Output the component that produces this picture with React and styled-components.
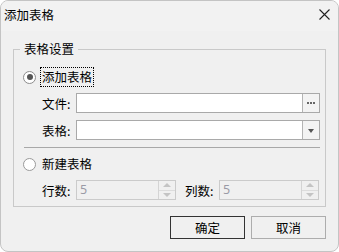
import React from "react";
import styled, { createGlobalStyle } from "styled-components";

const GlobalStyle = createGlobalStyle`
  html, body {
    margin: 0;
    padding: 0;
    background: #ffffff;
  }
  body {
    font-family: "Noto Sans CJK SC", "Noto Sans", sans-serif;
    font-size: 12px;
    color: #000;
  }
`;

const Window = styled.div`
  width: 339px;
  height: 252px;
  box-sizing: border-box;
  border: 1px solid #c4c4c4;
  border-radius: 8px;
  overflow: hidden;
  background: #f0f0f0;
  display: flex;
  flex-direction: column;
`;

const TitleBar = styled.div`
  height: 30px;
  flex: none;
  display: flex;
  align-items: center;
  justify-content: space-between;
  padding: 0 8px 4px 3px;
  box-sizing: border-box;
  background: #f2f2f2;
  font-size: 12.5px;
`;

const CloseButton = styled.div`
  width: 12px;
  height: 12px;
  display: flex;
  align-items: center;
  justify-content: center;
`;

const Body = styled.div`
  flex: 1;
  display: flex;
  flex-direction: column;
  padding: 10px 12px 0 12px;
`;

const Group = styled.fieldset`
  margin: 0;
  padding: 0 5px 6px 6px;
  border: 1px solid #c9c9c9;
  min-width: 0;
`;

const Legend = styled.legend`
  padding: 0 4px;
  line-height: 16px;
  font-size: 12.5px;
`;

const Content = styled.div`
  display: flex;
  flex-direction: column;
`;

const RadioRow = styled.div`
  height: 20px;
  margin-top: ${(p) => p.$top}px;
  display: flex;
  align-items: center;
  padding-left: 3px;
`;

const RadioCircle = styled.span`
  width: 11px;
  height: 11px;
  border-radius: 50%;
  border: 1px solid ${(p) => (p.$checked ? "#8c8c8c" : "#9a9a9a")};
  background: #fff;
  display: flex;
  align-items: center;
  justify-content: center;
  flex: none;
  &::after {
    content: "";
    width: 6px;
    height: 6px;
    border-radius: 50%;
    background: ${(p) => (p.$checked ? "#555" : "transparent")};
  }
`;

const RadioLabel = styled.span`
  margin-left: 4px;
  height: 18px;
  line-height: 18px;
  padding: 0 1px;
  font-size: 12.5px;
  border: 1px dotted ${(p) => (p.$focused ? "#000" : "transparent")};
`;

const FieldRow = styled.div`
  display: flex;
  align-items: center;
  margin-top: ${(p) => p.$top}px;
`;

const Label = styled.span`
  width: ${(p) => p.$width || 56}px;
  padding-left: ${(p) => p.$indent || 0}px;
  box-sizing: border-box;
  font-size: 12.5px;
  flex: none;
`;

const InputBox = styled.div`
  flex: 1;
  height: 20px;
  box-sizing: border-box;
  border: 1px solid #a9a9a9;
  background: #fff;
  display: flex;
  justify-content: flex-end;
`;

const SideButton = styled.div`
  width: 16px;
  border-left: 1px solid #b4b4b4;
  background: #f3f3f3;
  display: flex;
  align-items: center;
  justify-content: center;
  gap: 1px;
`;

const Dot = styled.span`
  width: 2px;
  height: 2px;
  background: #666;
`;

const Caret = styled.span`
  width: 0;
  height: 0;
  border-left: 3.5px solid transparent;
  border-right: 3.5px solid transparent;
  border-top: 4px solid #555;
  margin-top: 1px;
`;

const Separator = styled.div`
  height: 1px;
  background: #a8a8a8;
  margin: 7px 0 0 4px;
`;

const SpinBox = styled.div`
  width: ${(p) => p.$width}px;
  height: 20px;
  box-sizing: border-box;
  border: 1px solid #cbcbcb;
  background: #f0f0f0;
  display: flex;
  color: #9a9aa6;
  font-family: "Noto Sans", sans-serif;
  font-size: 12.5px;
`;

const SpinValue = styled.span`
  flex: 1;
  line-height: 18px;
  padding-left: 3px;
`;

const SpinButtons = styled.div`
  width: 16px;
  border-left: 1px solid #d4d4d4;
  display: flex;
  flex-direction: column;
`;

const SpinHalf = styled.div`
  flex: 1;
  display: flex;
  align-items: center;
  justify-content: center;
  border-top: ${(p) => (p.$down ? "1px solid #dcdcdc" : "none")};
  &::after {
    content: "";
    width: 0;
    height: 0;
    border-left: 4px solid transparent;
    border-right: 4px solid transparent;
    ${(p) =>
      p.$down ? "border-top: 4px solid #c4c4c4;" : "border-bottom: 4px solid #c4c4c4;"}
  }
`;

const Footer = styled.div`
  display: flex;
  justify-content: flex-end;
  gap: 6px;
  margin-top: 9px;
  padding-right: 0px;
`;

const Button = styled.div`
  width: 75px;
  height: 23px;
  box-sizing: border-box;
  border: 1px solid ${(p) => (p.$primary ? "#333" : "#adadad")};
  background: #f0f0f0;
  display: flex;
  align-items: center;
  justify-content: center;
  font-size: 12.5px;
`;

function Spin({ width }) {
  return (
    <SpinBox $width={width}>
      <SpinValue>5</SpinValue>
      <SpinButtons>
        <SpinHalf />
        <SpinHalf $down />
      </SpinButtons>
    </SpinBox>
  );
}

export default function App() {
  return (
    <>
      <GlobalStyle />
      <Window>
        <TitleBar>
          <span>添加表格</span>
          <CloseButton>
            <svg width="11" height="11" viewBox="0 0 11 11">
              <path d="M0.5 0.5 L10.5 10.5 M10.5 0.5 L0.5 10.5" stroke="#222" strokeWidth="1.1" fill="none" />
            </svg>
          </CloseButton>
        </TitleBar>
        <Body>
          <Group>
            <Legend>表格设置</Legend>
            <Content>
              <RadioRow $top={10}>
                <RadioCircle $checked />
                <RadioLabel $focused>添加表格</RadioLabel>
              </RadioRow>
              <FieldRow $top={6}>
                <Label $indent={22}>文件:</Label>
                <InputBox>
                  <SideButton>
                    <Dot />
                    <Dot />
                    <Dot />
                  </SideButton>
                </InputBox>
              </FieldRow>
              <FieldRow $top={7}>
                <Label $indent={22}>表格:</Label>
                <InputBox>
                  <SideButton>
                    <Caret />
                  </SideButton>
                </InputBox>
              </FieldRow>
              <Separator />
              <RadioRow $top={6}>
                <RadioCircle />
                <RadioLabel>新建表格</RadioLabel>
              </RadioRow>
              <FieldRow $top={6}>
                <Label $indent={22}>行数:</Label>
                <Spin width={100} />
                <Label $indent={9} $width={43}>列数:</Label>
                <Spin width={100} />
              </FieldRow>
            </Content>
          </Group>
          <Footer>
            <Button $primary>确定</Button>
            <Button>取消</Button>
          </Footer>
        </Body>
      </Window>
    </>
  );
}
